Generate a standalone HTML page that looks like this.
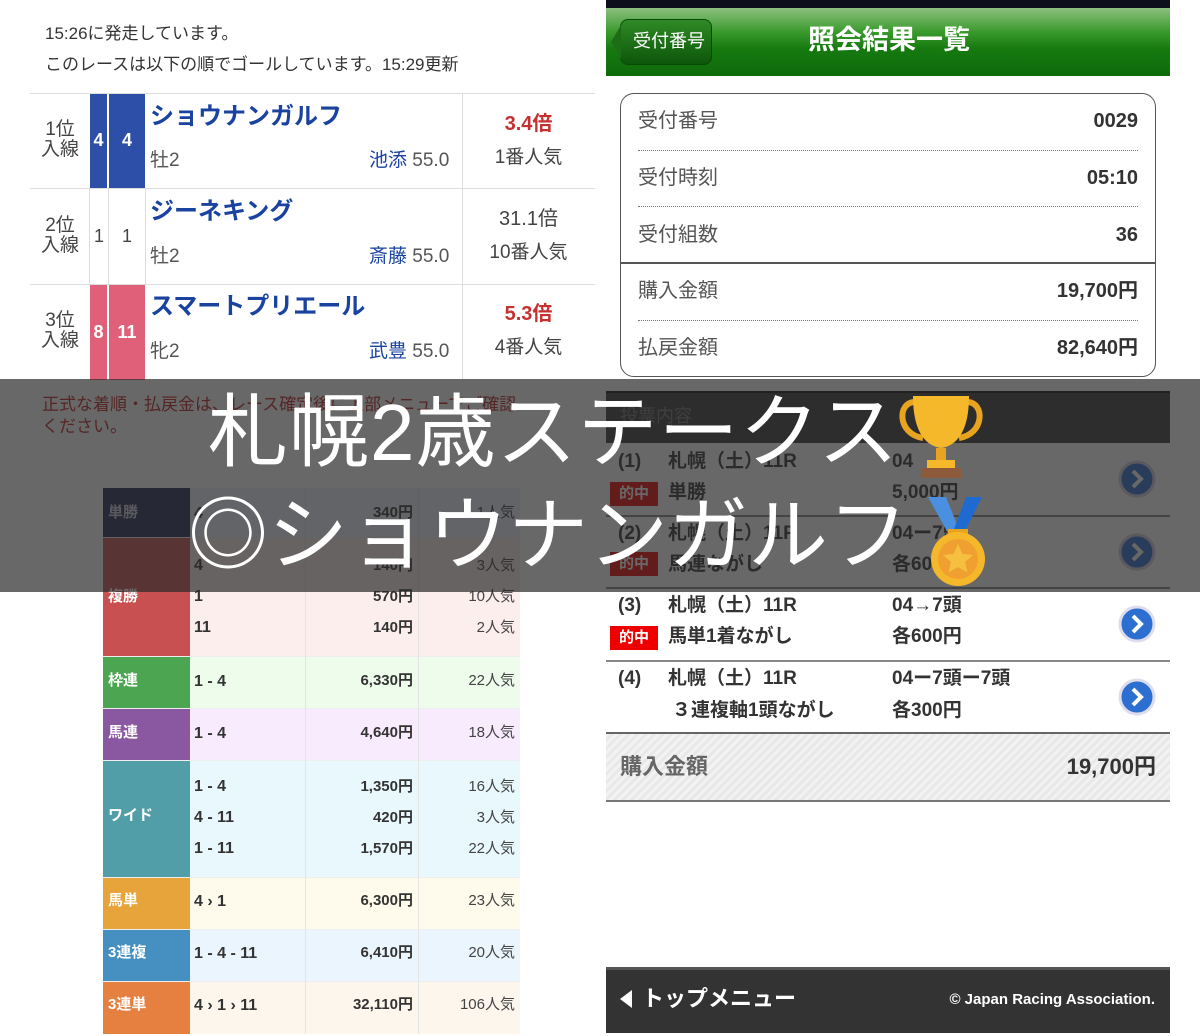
<!DOCTYPE html>
<html><head><meta charset="utf-8"><style>
*{margin:0;padding:0;box-sizing:border-box}
body{width:1200px;height:1036px;position:relative;background:#fff;overflow:hidden;font-family:"Liberation Sans","Noto Sans CJK JP",sans-serif;color:#333}
.a{position:absolute;white-space:nowrap;line-height:1.2}
.b{font-weight:bold}
.c{display:flex;align-items:center;justify-content:center}
</style></head><body>
<!-- LEFT TOP -->
<div class="a" style="left:45px;top:24px;font-size:17px;color:#333">15:26に発走しています。</div>
<div class="a" style="left:45px;top:55px;font-size:17px;color:#333">このレースは以下の順でゴールしています。15:29更新</div>
<div class="a" style="left:30px;top:93px;width:565px;height:1px;background:#ddd"></div>
<div class="a" style="left:30px;top:188px;width:565px;height:1px;background:#ddd"></div>
<div class="a" style="left:30px;top:284px;width:565px;height:1px;background:#ddd"></div>
<div class="a" style="left:462px;top:94px;width:1px;height:285px;background:#ddd"></div>
<div class="a" style="left:89px;top:189px;width:1px;height:95px;background:#ddd"></div>
<div class="a" style="left:108px;top:189px;width:1px;height:95px;background:#ddd"></div>
<div class="a" style="left:145px;top:189px;width:1px;height:95px;background:#ddd"></div>
<!-- row1 -->
<div class="a" style="left:36px;top:120px;width:48px;text-align:center;font-size:19px;line-height:20px;color:#444">1位<br>入線</div>
<div class="a c b" style="left:90px;top:94px;width:17px;height:94px;background:#2d4fa8;color:#fff;font-size:18px">4</div>
<div class="a c b" style="left:109px;top:94px;width:36px;height:94px;background:#2d4fa8;color:#fff;font-size:18px">4</div>
<div class="a b" style="left:150px;top:103px;font-size:24px;color:#1a43a0">ショウナンガルフ</div>
<div class="a" style="left:150px;top:150px;font-size:19px;color:#555">牡2</div>
<div class="a" style="left:369px;top:150px;font-size:19px;color:#1a43a0">池添 <span style="color:#555">55.0</span></div>
<div class="a b" style="left:462px;top:112px;width:133px;text-align:center;font-size:20px;color:#c53030">3.4倍</div>
<div class="a" style="left:462px;top:147px;width:133px;text-align:center;font-size:19px;color:#444">1番人気</div>
<!-- row2 -->
<div class="a" style="left:36px;top:216px;width:48px;text-align:center;font-size:19px;line-height:20px;color:#444">2位<br>入線</div>
<div class="a c" style="left:90px;top:189px;width:18px;height:95px;color:#444;font-size:18px">1</div>
<div class="a c" style="left:109px;top:189px;width:36px;height:95px;color:#444;font-size:18px">1</div>
<div class="a b" style="left:150px;top:198px;font-size:24px;color:#1a43a0">ジーネキング</div>
<div class="a" style="left:150px;top:246px;font-size:19px;color:#555">牡2</div>
<div class="a" style="left:369px;top:246px;font-size:19px;color:#1a43a0">斎藤 <span style="color:#555">55.0</span></div>
<div class="a" style="left:462px;top:207px;width:133px;text-align:center;font-size:20px;color:#444">31.1倍</div>
<div class="a" style="left:462px;top:242px;width:133px;text-align:center;font-size:19px;color:#444">10番人気</div>
<!-- row3 -->
<div class="a" style="left:36px;top:311px;width:48px;text-align:center;font-size:19px;line-height:20px;color:#444">3位<br>入線</div>
<div class="a c b" style="left:90px;top:285px;width:17px;height:95px;background:#e0607a;color:#fff;font-size:18px">8</div>
<div class="a c b" style="left:109px;top:285px;width:36px;height:95px;background:#e0607a;color:#fff;font-size:18px">11</div>
<div class="a b" style="left:150px;top:293px;font-size:24px;color:#1a43a0">スマートプリエール</div>
<div class="a" style="left:150px;top:341px;font-size:19px;color:#555">牝2</div>
<div class="a" style="left:369px;top:341px;font-size:19px;color:#1a43a0">武豊 <span style="color:#555">55.0</span></div>
<div class="a b" style="left:462px;top:302px;width:133px;text-align:center;font-size:20px;color:#c53030">5.3倍</div>
<div class="a" style="left:462px;top:337px;width:133px;text-align:center;font-size:19px;color:#444">4番人気</div>
<div class="a" style="left:42px;top:394px;font-size:17px;line-height:22px;color:#b22">正式な着順・払戻金は、レース確定後に上部メニューでご確認<br>ください。</div>
<!-- PAYOUT TABLE -->
<div class="a" style="left:103px;top:488px;width:417px;height:546px;background:#eee">
<div style="position:relative;height:100%">
<div class="a" style="left:0;top:0;width:87px;height:49px;background:#252a55"></div>
<div class="a" style="left:87px;top:0;width:330px;height:49px;background:#eef0fa"></div>
<div class="a" style="left:0;top:50px;width:87px;height:118px;background:#c85050"></div>
<div class="a" style="left:87px;top:50px;width:330px;height:118px;background:#fdeeee"></div>
<div class="a" style="left:0;top:169px;width:87px;height:51px;background:#4ca550"></div>
<div class="a" style="left:87px;top:169px;width:330px;height:51px;background:#eefcec"></div>
<div class="a" style="left:0;top:221px;width:87px;height:51px;background:#8a58a0"></div>
<div class="a" style="left:87px;top:221px;width:330px;height:51px;background:#f8ebfd"></div>
<div class="a" style="left:0;top:273px;width:87px;height:116px;background:#519ea8"></div>
<div class="a" style="left:87px;top:273px;width:330px;height:116px;background:#e8f8fd"></div>
<div class="a" style="left:0;top:390px;width:87px;height:51px;background:#e7a43a"></div>
<div class="a" style="left:87px;top:390px;width:330px;height:51px;background:#fefbec"></div>
<div class="a" style="left:0;top:442px;width:87px;height:51px;background:#4590c0"></div>
<div class="a" style="left:87px;top:442px;width:330px;height:51px;background:#ebf5fd"></div>
<div class="a" style="left:0;top:494px;width:87px;height:52px;background:#e58040"></div>
<div class="a" style="left:87px;top:494px;width:330px;height:52px;background:#fdf6ec"></div>
<div class="a" style="left:202px;top:0;width:1px;height:546px;background:#e4e4e4"></div>
<div class="a" style="left:315px;top:0;width:1px;height:546px;background:#e4e4e4"></div>
</div></div>
<div class="a b" style="left:108px;top:504px;font-size:15px;color:#ccd">単勝</div>
<div class="a b" style="left:108px;top:588px;font-size:15px;color:#fff">複勝</div>
<div class="a b" style="left:108px;top:672px;font-size:15px;color:#fff">枠連</div>
<div class="a b" style="left:108px;top:724px;font-size:15px;color:#fff">馬連</div>
<div class="a b" style="left:108px;top:807px;font-size:15px;color:#fff">ワイド</div>
<div class="a b" style="left:108px;top:892px;font-size:15px;color:#fff">馬単</div>
<div class="a b" style="left:108px;top:944px;font-size:15px;color:#fff">3連複</div>
<div class="a b" style="left:108px;top:996px;font-size:15px;color:#fff">3連単</div>
<div class="a b" style="left:194px;top:504px;font-size:16px;color:#333">4</div>
<div class="a b" style="left:194px;top:550px;font-size:16px;color:#333;line-height:31px">4<br>1<br>11</div>
<div class="a b" style="left:194px;top:672px;font-size:16px;color:#333">1 - 4</div>
<div class="a b" style="left:194px;top:724px;font-size:16px;color:#333">1 - 4</div>
<div class="a b" style="left:194px;top:771px;font-size:16px;color:#333;line-height:31px">1 - 4<br>4 - 11<br>1 - 11</div>
<div class="a b" style="left:194px;top:892px;font-size:16px;color:#333">4 › 1</div>
<div class="a b" style="left:194px;top:944px;font-size:16px;color:#333">1 - 4 - 11</div>
<div class="a b" style="left:194px;top:996px;font-size:16px;color:#333">4 › 1 › 11</div>
<div class="a b" style="left:305px;top:504px;width:108px;text-align:right;font-size:15px;color:#333">340円</div>
<div class="a b" style="left:305px;top:550px;width:108px;text-align:right;font-size:15px;color:#333;line-height:31px">140円<br>570円<br>140円</div>
<div class="a b" style="left:305px;top:672px;width:108px;text-align:right;font-size:15px;color:#333">6,330円</div>
<div class="a b" style="left:305px;top:724px;width:108px;text-align:right;font-size:15px;color:#333">4,640円</div>
<div class="a b" style="left:305px;top:771px;width:108px;text-align:right;font-size:15px;color:#333;line-height:31px">1,350円<br>420円<br>1,570円</div>
<div class="a b" style="left:305px;top:892px;width:108px;text-align:right;font-size:15px;color:#333">6,300円</div>
<div class="a b" style="left:305px;top:944px;width:108px;text-align:right;font-size:15px;color:#333">6,410円</div>
<div class="a b" style="left:305px;top:996px;width:108px;text-align:right;font-size:15px;color:#333">32,110円</div>
<div class="a" style="left:418px;top:504px;width:97px;text-align:right;font-size:15px;color:#444">1人気</div>
<div class="a" style="left:418px;top:550px;width:97px;text-align:right;font-size:15px;color:#444;line-height:31px">3人気<br>10人気<br>2人気</div>
<div class="a" style="left:418px;top:672px;width:97px;text-align:right;font-size:15px;color:#444">22人気</div>
<div class="a" style="left:418px;top:724px;width:97px;text-align:right;font-size:15px;color:#444">18人気</div>
<div class="a" style="left:418px;top:771px;width:97px;text-align:right;font-size:15px;color:#444;line-height:31px">16人気<br>3人気<br>22人気</div>
<div class="a" style="left:418px;top:892px;width:97px;text-align:right;font-size:15px;color:#444">23人気</div>
<div class="a" style="left:418px;top:944px;width:97px;text-align:right;font-size:15px;color:#444">20人気</div>
<div class="a" style="left:418px;top:996px;width:97px;text-align:right;font-size:15px;color:#444">106人気</div>

<!-- RIGHT -->
<div class="a" style="left:606px;top:0;width:564px;height:8px;background:#0d0f1c"></div>
<div class="a" style="left:606px;top:8px;width:564px;height:68px;background:linear-gradient(#8cc080,#3a9a2c 35%,#167a10 60%,#0e6a0a)"></div>
<div class="a c" style="left:620px;top:19px;width:92px;height:46px;border-radius:8px;background:linear-gradient(#2f8a26,#0d560a);border:1px solid #0a4a08;color:#fff;font-size:18px;padding-left:6px">受付番号</div>
<div class="a" style="left:611px;top:25px;width:0;height:0;border-top:17px solid transparent;border-bottom:17px solid transparent;border-right:10px solid #1d6d16"></div>
<div class="a b" style="left:600px;top:24px;width:578px;text-align:center;font-size:27px;color:#fff">照会結果一覧</div>
<div class="a" style="left:620px;top:93px;width:536px;height:284px;border:1.5px solid #555;border-radius:14px"></div>
<div class="a" style="left:638px;top:150px;width:500px;border-top:1px dotted #777"></div>
<div class="a" style="left:638px;top:206px;width:500px;border-top:1px dotted #777"></div>
<div class="a" style="left:621px;top:262px;width:534px;height:1.5px;background:#555"></div>
<div class="a" style="left:638px;top:320px;width:500px;border-top:1px dotted #777"></div>
<div class="a" style="left:638px;top:109px;font-size:20px;color:#555">受付番号</div>
<div class="a b" style="left:900px;top:109px;width:238px;text-align:right;font-size:20px;color:#333">0029</div>
<div class="a" style="left:638px;top:166px;font-size:20px;color:#555">受付時刻</div>
<div class="a b" style="left:900px;top:166px;width:238px;text-align:right;font-size:20px;color:#333">05:10</div>
<div class="a" style="left:638px;top:223px;font-size:20px;color:#555">受付組数</div>
<div class="a b" style="left:900px;top:223px;width:238px;text-align:right;font-size:20px;color:#333">36</div>
<div class="a" style="left:638px;top:279px;font-size:20px;color:#555">購入金額</div>
<div class="a b" style="left:900px;top:279px;width:238px;text-align:right;font-size:20px;color:#333">19,700円</div>
<div class="a" style="left:638px;top:336px;font-size:20px;color:#555">払戻金額</div>
<div class="a b" style="left:900px;top:336px;width:238px;text-align:right;font-size:20px;color:#333">82,640円</div>
<div class="a" style="left:606px;top:391px;width:564px;height:52px;background:#3a3a3a;border-top:2px solid #111"></div>
<div class="a" style="left:620px;top:406px;font-size:18px;color:#777">投票内容</div>
<div class="a" style="left:606px;top:515px;width:564px;height:2px;background:#888"></div>
<div class="a" style="left:606px;top:587px;width:564px;height:2px;background:#888"></div>
<div class="a" style="left:606px;top:660px;width:564px;height:2px;background:#888"></div>
<div class="a" style="left:606px;top:732px;width:564px;height:2px;background:#666"></div>
<!-- bet rows -->
<div class="a b" style="left:618px;top:451px;font-size:19px;color:#333">(1)</div>
<div class="a b" style="left:668px;top:451px;font-size:19px;color:#333">札幌（土）11R</div>
<div class="a b" style="left:892px;top:451px;font-size:19px;color:#333">04</div>
<div class="a c b" style="left:610px;top:482px;width:48px;height:24px;background:#e00;color:#fff;font-size:15px">的中</div>
<div class="a b" style="left:668px;top:482px;font-size:19px;color:#333">単勝</div>
<div class="a b" style="left:892px;top:482px;font-size:19px;color:#333">5,000円</div>
<div class="a b" style="left:618px;top:523px;font-size:19px;color:#333">(2)</div>
<div class="a b" style="left:668px;top:523px;font-size:19px;color:#333">札幌（土）11R</div>
<div class="a b" style="left:892px;top:523px;font-size:19px;color:#333">04ー7頭</div>
<div class="a c b" style="left:610px;top:552px;width:48px;height:24px;background:#e00;color:#fff;font-size:15px">的中</div>
<div class="a b" style="left:668px;top:554px;font-size:19px;color:#333">馬連ながし</div>
<div class="a b" style="left:892px;top:554px;font-size:19px;color:#333">各600円</div>
<div class="a b" style="left:618px;top:595px;font-size:19px;color:#333">(3)</div>
<div class="a b" style="left:668px;top:595px;font-size:19px;color:#333">札幌（土）11R</div>
<div class="a b" style="left:892px;top:595px;font-size:19px;color:#333">04→7頭</div>
<div class="a c b" style="left:610px;top:626px;width:48px;height:24px;background:#e00;color:#fff;font-size:15px">的中</div>
<div class="a b" style="left:668px;top:626px;font-size:19px;color:#333">馬単1着ながし</div>
<div class="a b" style="left:892px;top:626px;font-size:19px;color:#333">各600円</div>
<div class="a b" style="left:618px;top:668px;font-size:19px;color:#333">(4)</div>
<div class="a b" style="left:668px;top:668px;font-size:19px;color:#333">札幌（土）11R</div>
<div class="a b" style="left:892px;top:668px;font-size:19px;color:#333">04ー7頭ー7頭</div>
<div class="a b" style="left:672px;top:700px;font-size:19px;color:#333">３連複軸1頭ながし</div>
<div class="a b" style="left:892px;top:700px;font-size:19px;color:#333">各300円</div>
<svg class="a" style="left:1117px;top:459px" width="40" height="40"><circle cx="20" cy="20" r="17" fill="#2d6fd0" stroke="#ccd" stroke-width="3"/><path d="M16 12l8 8-8 8" stroke="#fff" stroke-width="4" fill="none"/></svg>
<svg class="a" style="left:1117px;top:532px" width="40" height="40"><circle cx="20" cy="20" r="17" fill="#2d6fd0" stroke="#ccd" stroke-width="3"/><path d="M16 12l8 8-8 8" stroke="#fff" stroke-width="4" fill="none"/></svg>
<svg class="a" style="left:1117px;top:604px" width="40" height="40"><circle cx="20" cy="20" r="17" fill="#2d6fd0" stroke="#dde" stroke-width="3"/><path d="M16 12l8 8-8 8" stroke="#fff" stroke-width="4" fill="none"/></svg>
<svg class="a" style="left:1117px;top:677px" width="40" height="40"><circle cx="20" cy="20" r="17" fill="#2d6fd0" stroke="#dde" stroke-width="3"/><path d="M16 12l8 8-8 8" stroke="#fff" stroke-width="4" fill="none"/></svg>
<div class="a" style="left:606px;top:734px;width:564px;height:68px;background:repeating-linear-gradient(135deg,#f2f2f2 0 3px,#e8e8e8 3px 6px);border-bottom:2px solid #777"></div>
<div class="a b" style="left:620px;top:754px;font-size:22px;color:#666">購入金額</div>
<div class="a b" style="left:900px;top:754px;width:256px;text-align:right;font-size:22px;color:#333">19,700円</div>
<div class="a" style="left:606px;top:967px;width:564px;height:66px;background:#333;border-top:3px solid #555"></div>
<div class="a" style="left:620px;top:990px;width:0;height:0;border-top:9px solid transparent;border-bottom:9px solid transparent;border-right:12px solid #fff"></div>
<div class="a b" style="left:642px;top:986px;font-size:22px;color:#fff">トップメニュー</div>
<div class="a b" style="left:900px;top:991px;width:255px;text-align:right;font-size:15px;color:#fff">© Japan Racing Association.</div>

<!-- OVERLAY -->
<div class="a" style="left:0;top:379px;width:1200px;height:213px;background:rgba(40,40,40,0.7)"></div>
<div class="a" style="left:208px;top:383px;font-size:80px;line-height:100px;color:#fff;letter-spacing:1px">札幌2歳ステークス</div>
<div class="a" style="left:188px;top:486px;font-size:80px;line-height:100px;color:#fff">◎ショウナンガルフ</div>
<svg class="a" style="left:893px;top:394px" width="96" height="85" viewBox="0 0 96 85"><path d="M22 8 C4 8 4 40 30 44" stroke="#e8a420" stroke-width="6" fill="none"/><path d="M74 8 C92 8 92 40 66 44" stroke="#e8a420" stroke-width="6" fill="none"/><path d="M20 2 H76 C76 40 62 52 48 54 C34 52 20 40 20 2Z" fill="#f5b82a"/><rect x="43" y="54" width="10" height="14" fill="#e8a420"/><rect x="34" y="66" width="28" height="8" fill="#f5b82a"/><rect x="28" y="74" width="40" height="10" fill="#8d5a3c"/></svg>
<svg class="a" style="left:928px;top:497px" width="60" height="92" viewBox="0 0 60 92"><path d="M0 0h18l12 30-10 6z" fill="#4a8fe0"/><path d="M54 0H38L26 32l10 4z" fill="#1e6ad0"/><rect x="20" y="32" width="20" height="10" fill="#e8a420"/><circle cx="30" cy="62" r="27" fill="#f5b82a"/><circle cx="30" cy="62" r="20" fill="#f0a030"/><path d="M30 47l4.5 10 10.5 1-8 7 2.5 10.5L30 70l-9.5 5.5L23 65l-8-7 10.5-1z" fill="#f5c040"/></svg>
</body></html>
